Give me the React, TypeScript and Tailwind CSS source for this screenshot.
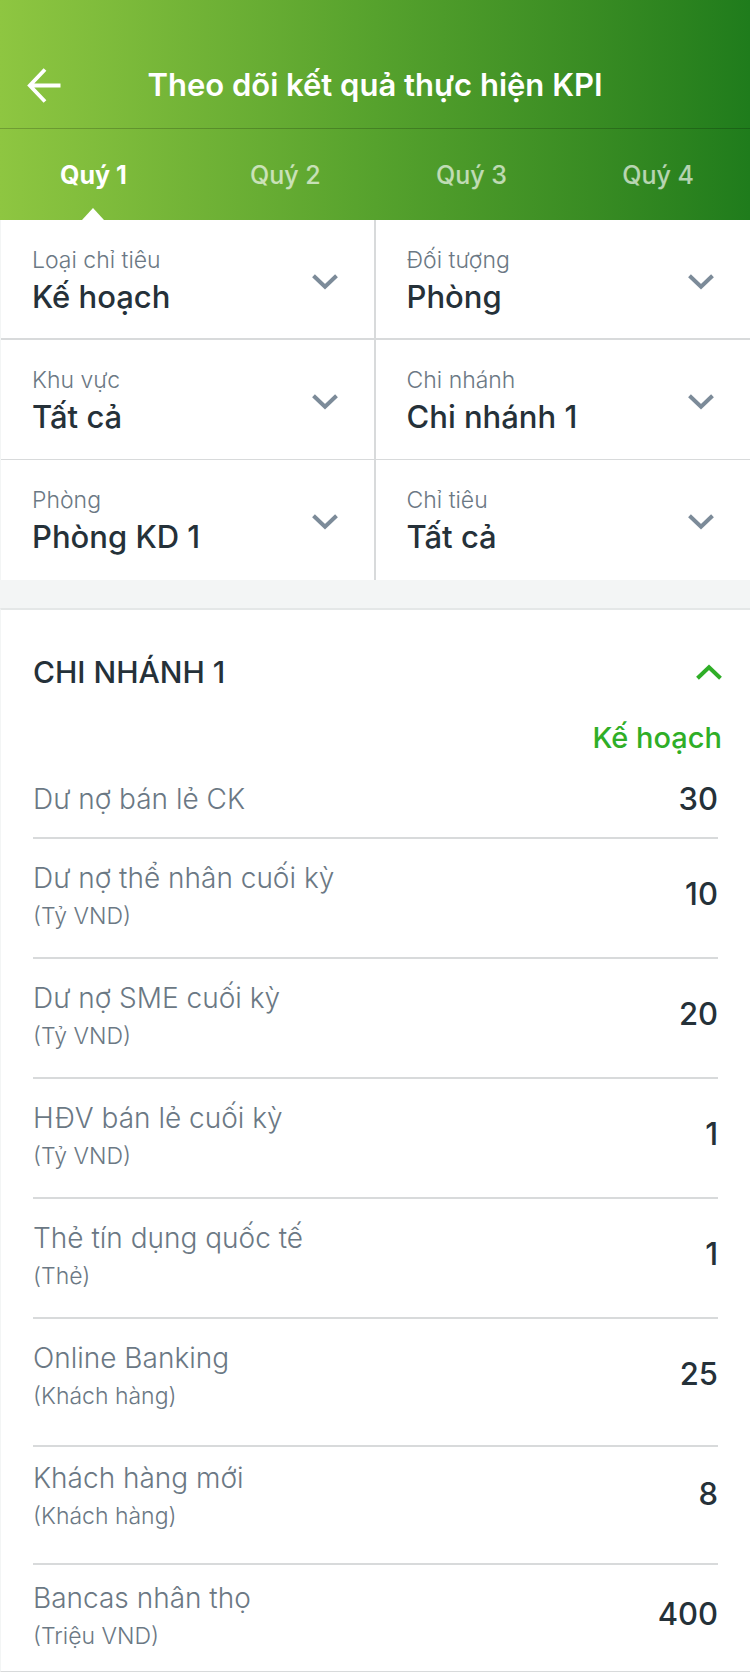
import { useState } from "react";

const quarters = ["Quý 1", "Quý 2", "Quý 3", "Quý 4"];

const filters = [
  { id: "type", label: "Loại chỉ tiêu", value: "Kế hoạch" },
  { id: "subject", label: "Đối tượng", value: "Phòng" },
  { id: "region", label: "Khu vực", value: "Tất cả" },
  { id: "branch", label: "Chi nhánh", value: "Chi nhánh 1" },
  { id: "department", label: "Phòng", value: "Phòng KD 1" },
  { id: "metric", label: "Chỉ tiêu", value: "Tất cả" },
];

const rowStyles = {
  single: "h-[78px] align-middle",
  normal: "h-[120px] pt-5 align-top",
  tall: "h-32 pt-5 align-top",
  raised: "h-[118px] pt-3 align-top",
  last: "h-[107px] pt-3.5 align-top",
};

type Metric = { name: string; unit?: string; value: string; row: keyof typeof rowStyles };

const metrics: Metric[] = [
  { name: "Dư nợ bán lẻ CK", value: "30", row: "single" },
  { name: "Dư nợ thể nhân cuối kỳ", unit: "(Tỷ VND)", value: "10", row: "normal" },
  { name: "Dư nợ SME cuối kỳ", unit: "(Tỷ VND)", value: "20", row: "normal" },
  { name: "HĐV bán lẻ cuối kỳ", unit: "(Tỷ VND)", value: "1", row: "normal" },
  { name: "Thẻ tín dụng quốc tế", unit: "(Thẻ)", value: "1", row: "normal" },
  { name: "Online Banking", unit: "(Khách hàng)", value: "25", row: "tall" },
  { name: "Khách hàng mới", unit: "(Khách hàng)", value: "8", row: "raised" },
  { name: "Bancas nhân thọ", unit: "(Triệu VND)", value: "400", row: "last" },
];

function Chevron({ className }: { className: string }) {
  return (
    <svg className={className} width="26" height="16" viewBox="0 0 26 16" fill="none" aria-hidden="true">
      <path d="M1.5 1.7 13 12.8 24.5 1.7" stroke="currentColor" strokeWidth="4" />
    </svg>
  );
}

function Header({ active, onSelect }: { active: number; onSelect: (index: number) => void }) {
  return (
    <header className="bg-linear-to-r from-[#8ec641] via-[#56a22d] to-[#1f7c1c] text-white">
      <div className="grid grid-cols-[60px_1fr_60px] items-center border-b border-black/20 px-[22px] pt-[63px] pb-[21px]">
        <button type="button" aria-label="Quay lại" className="flex size-11 items-center justify-center">
          <svg width="34" height="36" viewBox="0 0 34 36" fill="none" aria-hidden="true">
            <path d="M33.5 18.5H3M18 2.5 2.8 18.5 18 34.5" stroke="currentColor" strokeWidth="3.8" />
          </svg>
        </button>
        <h1 className="text-center text-[31px] leading-11 font-semibold whitespace-nowrap">
          Theo dõi kết quả thực hiện KPI
        </h1>
      </div>
      <nav className="flex justify-between pr-14 pl-[60px]">
        {quarters.map((quarter, index) => (
          <button
            key={quarter}
            type="button"
            onClick={() => onSelect(index)}
            className={
              index === active
                ? "relative h-[91px] pt-0.5 text-[25px] font-bold first:mr-2"
                : "relative h-[91px] pt-0.5 text-[25px] font-medium text-white/65 first:mr-2"
            }
          >
            {quarter}
            {index === active && (
              <svg
                className="absolute bottom-0 left-1/2 -translate-x-1/2"
                width="22"
                height="12"
                viewBox="0 0 22 12"
                aria-hidden="true"
              >
                <path d="M11 0 22 12H0Z" fill="white" />
              </svg>
            )}
          </button>
        ))}
      </nav>
    </header>
  );
}

function Filter({ id, label, value }: { id: string; label: string; value: string }) {
  return (
    <div className="relative h-[120px] border-[#d8dadb] pt-6 pl-[31px] odd:border-r-2 nth-[-n+2]:border-b-2 nth-[3]:border-b nth-[4]:border-b">
      <label htmlFor={id} className="block text-[23px] leading-8 font-light text-[#6b7884]">
        {label}
      </label>
      <select
        id={id}
        className="block h-[42px] w-full appearance-none bg-transparent text-[31px] leading-[42px] font-medium text-[#253139]"
      >
        <option>{value}</option>
      </select>
      <Chevron className="pointer-events-none absolute top-[54px] right-9 text-[#7c8b99]" />
    </div>
  );
}

export default function App() {
  const [active, setActive] = useState(0);
  const [open, setOpen] = useState(true);

  return (
    <div className="bg-[#f3f5f5] font-['Inter','Noto_Sans',sans-serif]">
      <Header active={active} onSelect={setActive} />
      <section className="grid grid-cols-2 border-l border-[#f3f5f5] bg-white">
        {filters.map((filter) => (
          <Filter key={filter.id} {...filter} />
        ))}
      </section>
      <section className="mt-7 border-t-2 border-b border-l border-t-[#e4e7e7] border-b-[#d8dadb] border-l-[#f3f5f5] bg-white px-8">
        <h2 className="pt-10">
          <button
            type="button"
            aria-expanded={open}
            onClick={() => setOpen(!open)}
            className="flex w-full items-center justify-between text-[30px] leading-11 font-[450] text-[#253139]"
          >
            CHI NHÁNH 1
            <Chevron className={open ? "-mr-1 rotate-180 text-[#2fae27]" : "-mr-1 text-[#2fae27]"} />
          </button>
        </h2>
        {open && (
          <table className="w-full">
            <thead>
              <tr>
                <th aria-label="Chỉ tiêu" />
                <th className="pt-[22px] text-right text-[29px] leading-11 font-medium text-[#2fae27]">
                  <span className="-mr-1">Kế hoạch</span>
                </th>
              </tr>
            </thead>
            <tbody className="divide-y-2 divide-[#d8dadb]">
              {metrics.map((metric) => (
                <tr key={metric.name}>
                  <td className={rowStyles[metric.row]}>
                    <div className="text-[28px] leading-[38px] font-light text-[#6b7884]">{metric.name}</div>
                    {metric.unit && (
                      <div className="text-[23px] leading-[38px] font-light text-[#6b7884]">{metric.unit}</div>
                    )}
                  </td>
                  <td className={rowStyles[metric.row]}>
                    <div
                      className={
                        metric.unit
                          ? "pt-[15px] text-right text-[31px] leading-10 font-[450] text-[#253139]"
                          : "text-right text-[31px] leading-10 font-[450] text-[#253139]"
                      }
                    >
                      {metric.value}
                    </div>
                  </td>
                </tr>
              ))}
            </tbody>
          </table>
        )}
      </section>
    </div>
  );
}
